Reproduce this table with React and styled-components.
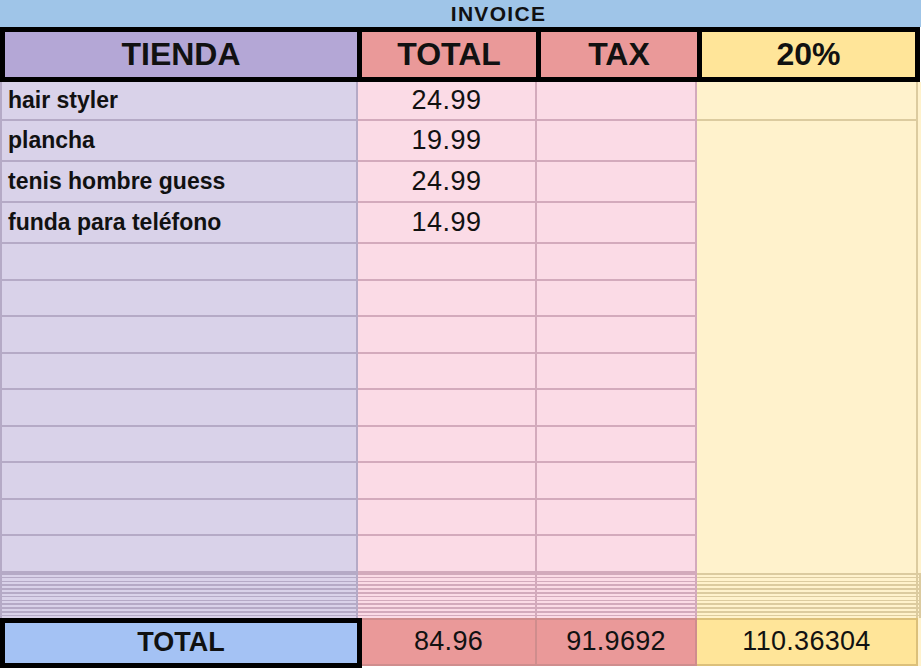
import React from "react";
import styled, { createGlobalStyle } from "styled-components";

const GlobalStyle = createGlobalStyle`
  html, body {
    margin: 0;
    padding: 0;
    background: #ffffff;
    overflow: hidden;
  }
  body {
    font-family: "Liberation Sans", Arial, sans-serif;
    color: #111;
  }
`;

const palette = {
  store: { bg: "#d9d2e9", line: "#b5aac6" },
  money: { bg: "#fbdbe6", line: "#d3aabc" },
  tax: { bg: "#fbdbe6", line: "#d3aabc" },
  pct: { bg: "#fff2cc", line: "#dccb9f" },
};

const items = [
  { name: "hair styler", total: "24.99" },
  { name: "plancha", total: "19.99" },
  { name: "tenis hombre guess", total: "24.99" },
  { name: "funda para teléfono", total: "14.99" },
];

const emptyRows = 9;

const Sheet = styled.div`
  width: 921px;
  height: 668px;
  display: flex;
  flex-direction: column;
  overflow: hidden;
`;

const TitleBar = styled.div`
  height: 27px;
  background: #9fc5e8;
  display: flex;
  align-items: center;
  justify-content: center;
  padding-left: 76px;
  font-size: 21px;
  font-weight: bold;
  letter-spacing: 1.3px;
`;

const HeaderRow = styled.div`
  width: 920px;
  height: 55px;
  box-sizing: border-box;
  display: grid;
  grid-template-columns: 352px 174px 156px 213px;
  gap: 5px;
  padding: 5px;
  background: #000;
`;

const HeadCell = styled.div`
  background: ${(p) => p.$bg};
  display: flex;
  align-items: center;
  justify-content: center;
  font-size: 32px;
  font-weight: bold;
`;

const Body = styled.div`
  display: grid;
  grid-template-columns: 358px 179px 160px 221px 3px;
  grid-template-rows: 39px repeat(3, 41px) repeat(${emptyRows}, 36.55px);
`;

const Cell = styled.div`
  box-sizing: border-box;
  background: ${(p) => palette[p.$kind].bg};
  border-right: 2px solid ${(p) => palette[p.$kind].line};
  border-bottom: 2px solid ${(p) => palette[p.$kind].line};
  ${(p) => p.$first && `border-left: 2px solid ${palette[p.$kind].line};`}
  display: flex;
  align-items: center;
  justify-content: ${(p) => (p.$center ? "center" : "flex-start")};
  padding-left: ${(p) => (p.$center ? "0" : "6px")};
  padding-bottom: 1px;
  font-size: ${(p) => (p.$center ? "27px" : "23px")};
  font-weight: ${(p) => (p.$center ? "normal" : "bold")};
  letter-spacing: ${(p) => (p.$center ? "0.5px" : "0")};
  white-space: nowrap;
`;

const MergedCell = styled.div`
  grid-column: 4;
  grid-row: 2 / span 12;
  background: ${palette.pct.bg};
  border-right: 2px solid ${palette.pct.line};
`;

const EdgeStrip = styled.div`
  grid-column: 5;
  grid-row: 1 / span 13;
  background: ${palette.pct.bg};
`;

const Squeezed = styled.div`
  display: grid;
  grid-template-columns: 358px 179px 160px 221px 3px;
  height: 45px;
`;

const Stripe = styled.div`
  box-sizing: border-box;
  border-right: 2px solid ${(p) => palette[p.$kind].line};
  ${(p) => p.$first && `border-left: 2px solid ${palette[p.$kind].line};`}
  background: repeating-linear-gradient(
    to bottom,
    ${(p) => palette[p.$kind].line} 0px,
    ${(p) => palette[p.$kind].line} 1.5px,
    ${(p) => palette[p.$kind].bg} 1.5px,
    ${(p) => palette[p.$kind].bg} 3.8px
  );
`;

const TotalRow = styled.div`
  display: grid;
  grid-template-columns: 362px 175px 160px 221px 3px;
  height: 50px;
`;

const TotalLabel = styled.div`
  box-sizing: border-box;
  border: 5px solid #000;
  background: #a4c2f4;
  display: flex;
  align-items: center;
  justify-content: center;
  font-size: 27px;
  font-weight: bold;
`;

const TotalValue = styled.div`
  box-sizing: border-box;
  height: 48px;
  background: ${(p) => p.$bg};
  border-top: 2px solid ${(p) => p.$line};
  border-right: 2px solid ${(p) => p.$line};
  border-bottom: 2px solid ${(p) => p.$line};
  display: flex;
  align-items: center;
  justify-content: center;
  font-size: 27px;
  letter-spacing: 0.3px;
`;

const TotalEdge = styled.div`
  height: 48px;
  background: #fff2cc;
`;

export default function App() {
  const rows = [
    ...items,
    ...Array.from({ length: emptyRows }, () => ({ name: "", total: "" })),
  ];

  return (
    <>
      <GlobalStyle />
      <Sheet>
        <TitleBar>INVOICE</TitleBar>
        <HeaderRow>
          <HeadCell $bg="#b4a7d6">TIENDA</HeadCell>
          <HeadCell $bg="#ea9999">TOTAL</HeadCell>
          <HeadCell $bg="#ea9999">TAX</HeadCell>
          <HeadCell $bg="#ffe599">20%</HeadCell>
        </HeaderRow>
        <Body>
          <EdgeStrip />
          {rows.map((r, i) => (
            <React.Fragment key={i}>
              <Cell $kind="store" $first>
                {r.name}
              </Cell>
              <Cell $kind="money" $center>
                {r.total}
              </Cell>
              <Cell $kind="tax" $center />
              {i === 0 && <Cell $kind="pct" />}
              {i === 1 && <MergedCell />}
            </React.Fragment>
          ))}
        </Body>
        <Squeezed>
          <Stripe $kind="store" $first />
          <Stripe $kind="money" />
          <Stripe $kind="tax" />
          <Stripe $kind="pct" />
          <Stripe $kind="pct" />
        </Squeezed>
        <TotalRow>
          <TotalLabel>TOTAL</TotalLabel>
          <TotalValue $bg="#ea9999" $line="#cf8d8d">
            84.96
          </TotalValue>
          <TotalValue $bg="#ea9999" $line="#cf8d8d">
            91.9692
          </TotalValue>
          <TotalValue $bg="#ffe599" $line="#dcc07a">
            110.36304
          </TotalValue>
          <TotalEdge />
        </TotalRow>
      </Sheet>
    </>
  );
}
